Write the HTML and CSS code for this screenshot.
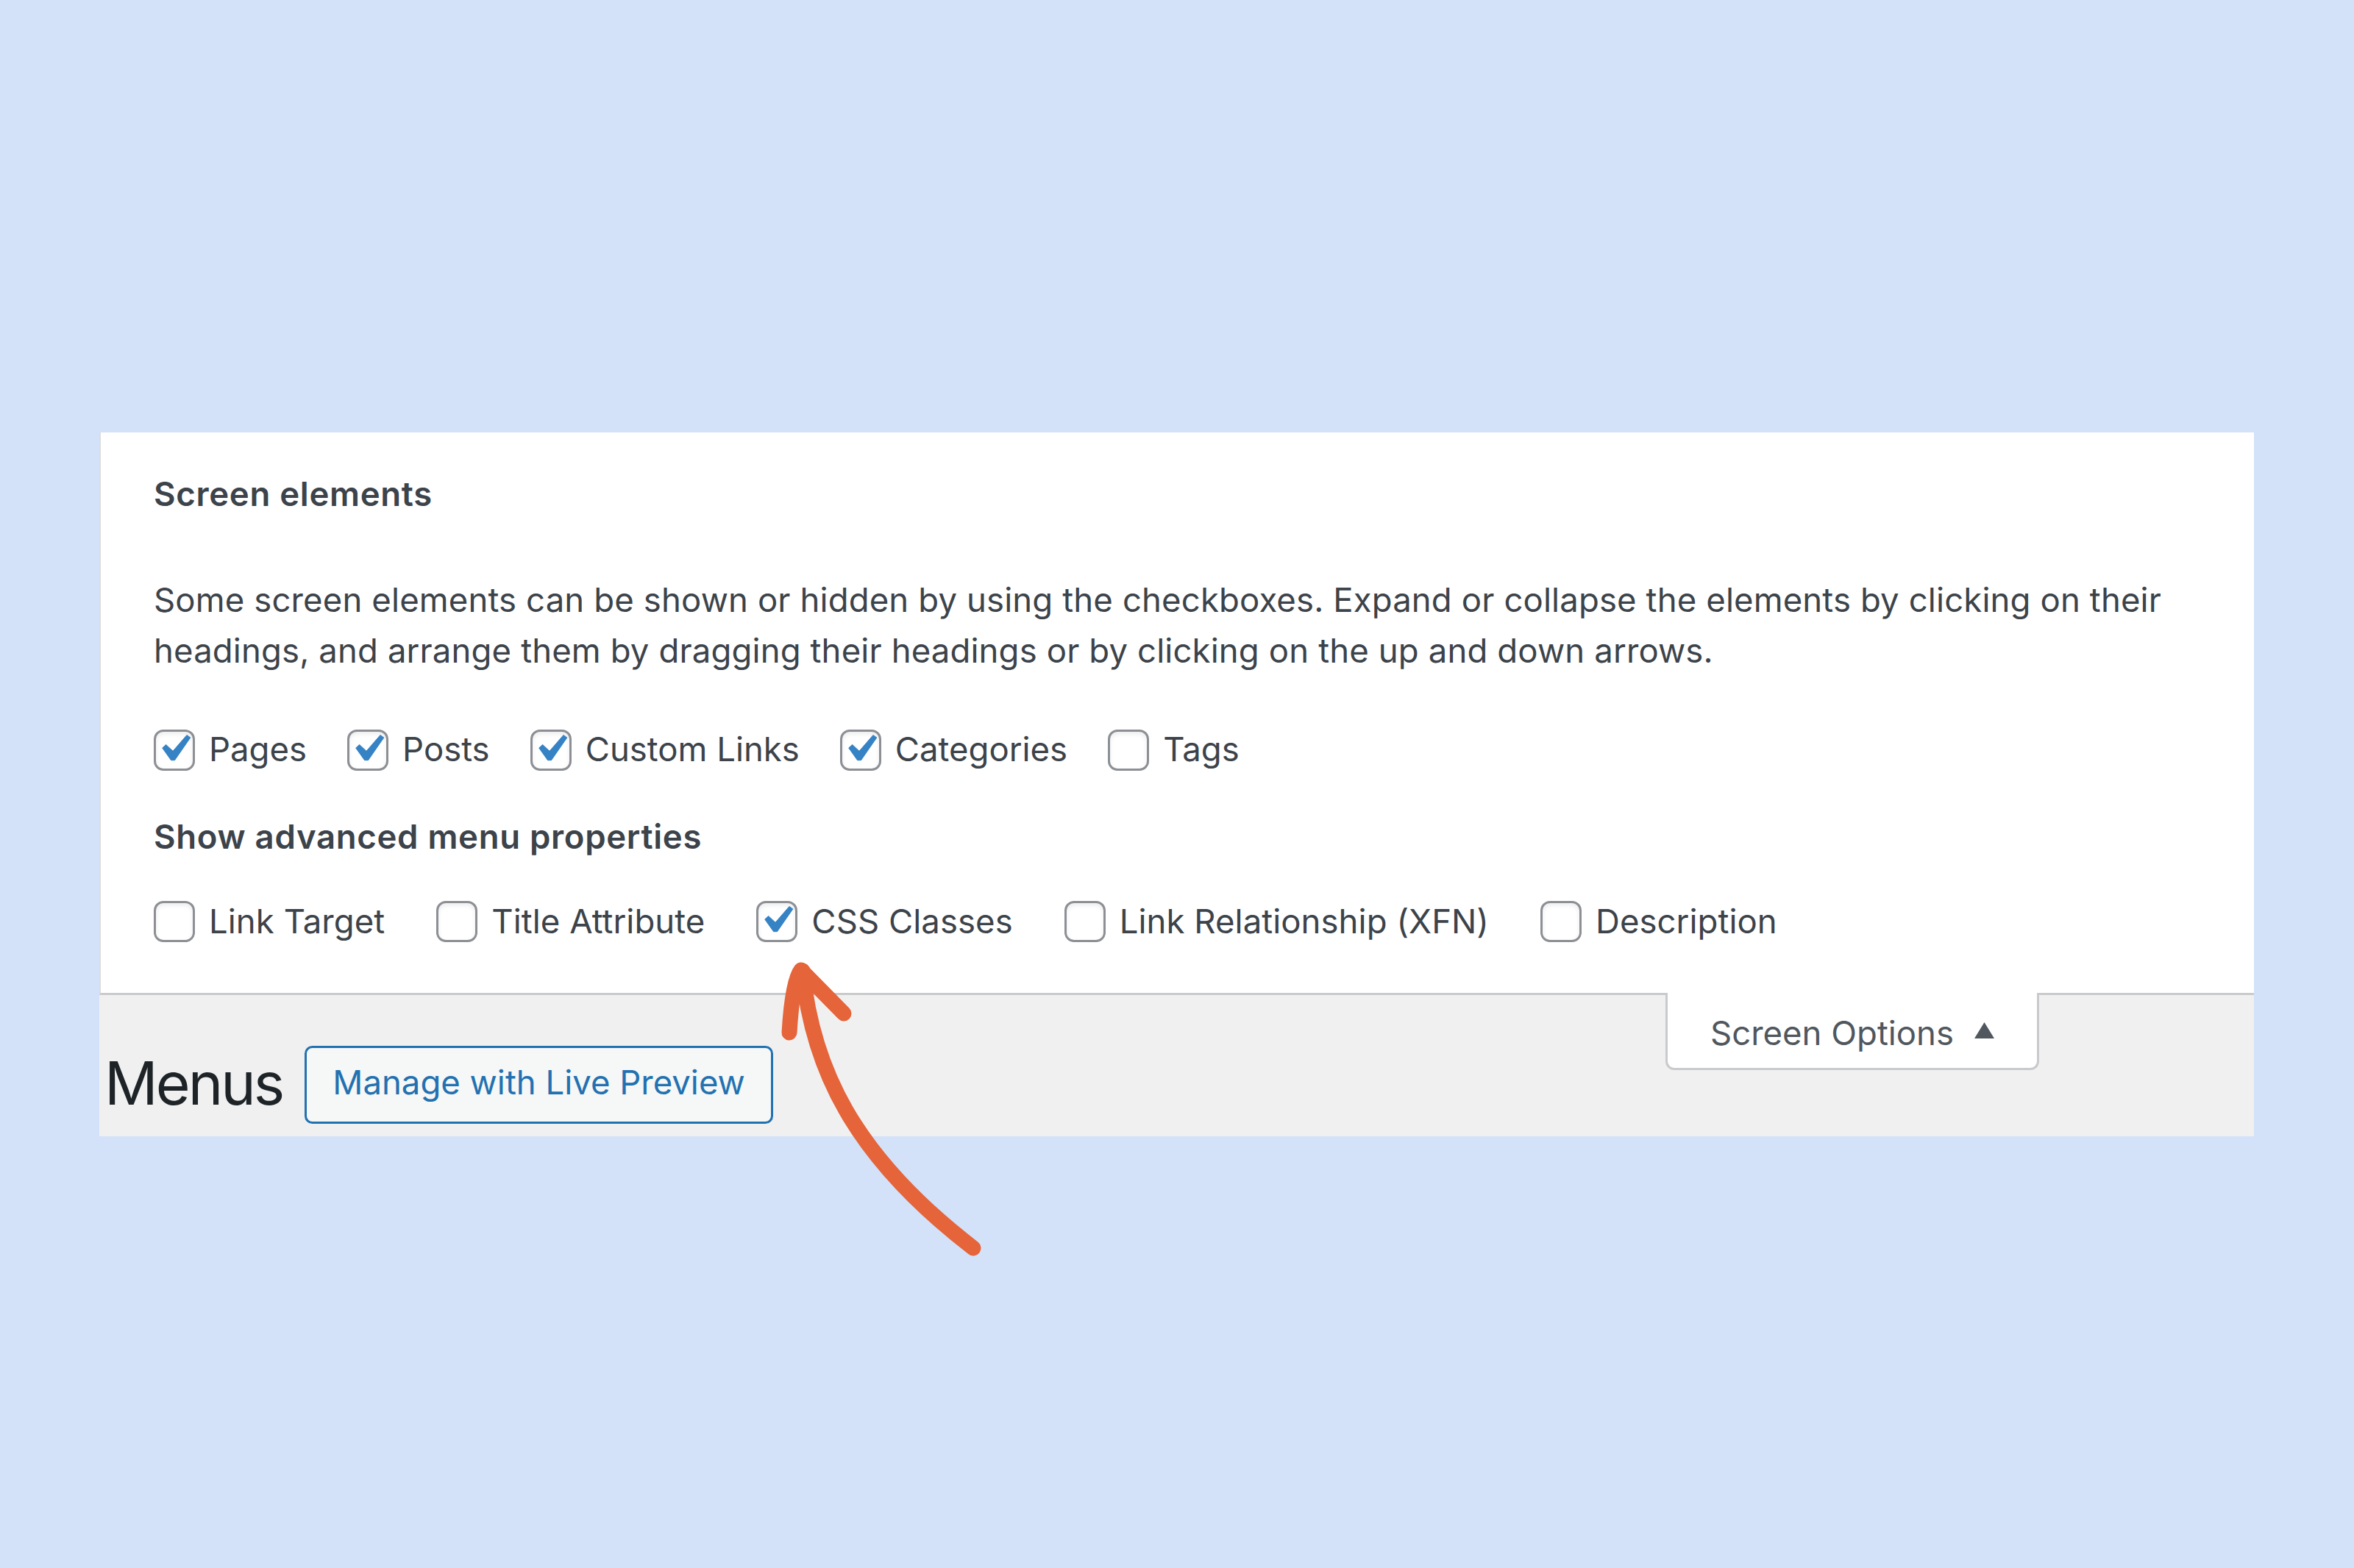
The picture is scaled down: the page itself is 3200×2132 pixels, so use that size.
FILE: index.html
```html
<!DOCTYPE html>
<html lang="en">
<head>
<meta charset="utf-8">
<title>Screen Options – Menus</title>
<link rel="stylesheet" href="styles.css">
</head>
<body>
<div class="stage">
  <div class="screen">
    <div class="panel">
      <h5 class="legend">Screen elements</h5>
      <p class="desc">Some screen elements can be shown or hidden by using the checkboxes. Expand or collapse the elements by clicking on their headings, and arrange them by dragging their headings or by clicking on the up and down arrows.</p>
      <div class="prefs prefs-boxes">
        <label class="opt"><span class="cb"><svg class="tick" viewBox="2.6 2.86 15.24 15.24"><path d="M14.83 4.89l1.34.94-5.81 8.38H9.02L5.78 9.670l1.34-1.25 2.57 2.4z"/></svg></span>Pages</label>
        <label class="opt"><span class="cb"><svg class="tick" viewBox="2.6 2.86 15.24 15.24"><path d="M14.83 4.89l1.34.94-5.81 8.38H9.02L5.78 9.670l1.34-1.25 2.57 2.4z"/></svg></span>Posts</label>
        <label class="opt"><span class="cb"><svg class="tick" viewBox="2.6 2.86 15.24 15.24"><path d="M14.83 4.89l1.34.94-5.81 8.38H9.02L5.78 9.670l1.34-1.25 2.57 2.4z"/></svg></span>Custom Links</label>
        <label class="opt"><span class="cb"><svg class="tick" viewBox="2.6 2.86 15.24 15.24"><path d="M14.83 4.89l1.34.94-5.81 8.38H9.02L5.78 9.670l1.34-1.25 2.57 2.4z"/></svg></span>Categories</label>
        <label class="opt"><span class="cb"></span>Tags</label>
      </div>
      <h5 class="legend legend-adv">Show advanced menu properties</h5>
      <div class="prefs prefs-advanced">
        <label class="opt"><span class="cb"></span>Link Target</label>
        <label class="opt"><span class="cb"></span>Title Attribute</label>
        <label class="opt"><span class="cb"><svg class="tick" viewBox="2.6 2.86 15.24 15.24"><path d="M14.83 4.89l1.34.94-5.81 8.38H9.02L5.78 9.670l1.34-1.25 2.57 2.4z"/></svg></span>CSS Classes</label>
        <label class="opt"><span class="cb"></span>Link Relationship (XFN)</label>
        <label class="opt"><span class="cb"></span>Description</label>
      </div>
    </div>
    <div class="header-bar">
      <h1 class="page-title">Menus</h1>
      <a class="btn-live">Manage with Live Preview</a>
      <div class="tab">
        <span class="tab-label">Screen Options</span>
        <svg class="tab-arrow" viewBox="0 0 27 22"><path d="M13.5 0L27 22H0z"/></svg>
      </div>
    </div>
  </div>
  <svg class="arrow" viewBox="1040 1290 320 430" width="320" height="430">
    <path d="M1091 1320 C 1104 1450, 1158 1570, 1323 1697" />
    <path d="M1073 1404 C 1075 1370, 1079 1332, 1089 1319 L 1147 1378" />
  </svg>
</div>
</body>
</html>
```

FILE: styles.css
```css
html, body {
  margin: 0;
  padding: 0;
}

body {
  background: #d3e2f9;
  min-height: 2132px;
  font-family: "Inter", "Liberation Sans", sans-serif;
  color: #3c434a;
}

.stage {
  position: relative;
  padding: 588px 0 0 135px;
  min-height: 1544px;
}

.screen {
  width: 2929px;
}

.panel {
  background: #ffffff;
  border-left: 2px solid #dcdcde;
  border-bottom: 3px solid #c9cacd;
  padding: 50.4px 73px 63.4px 72px;
}

.legend {
  margin: 0;
  font-size: 45.5px;
  line-height: 68.25px;
  font-weight: 600;
  letter-spacing: 0.7px;
  color: #3c434a;
}

.legend-adv {
  margin-top: 50.8px;
}

.desc {
  margin: 75.8px 0 0;
  font-size: 45.5px;
  line-height: 68.25px;
  letter-spacing: 0.13px;
  color: #3c434a;
}

.prefs {
  display: flex;
  align-items: center;
  font-size: 45.5px;
  line-height: 68.25px;
}

.prefs-boxes {
  margin-top: 66.5px;
  gap: 55px;
}

.prefs-advanced {
  margin-top: 45.8px;
  gap: 70px;
  letter-spacing: 0.05px;
}

.opt {
  display: flex;
  align-items: center;
  color: #3c434a;
}

.cb {
  box-sizing: border-box;
  width: 56px;
  height: 56px;
  border: 3px solid #8c8f94;
  border-radius: 13px;
  background: #ffffff;
  box-shadow: inset 0 3px 6px rgba(0, 0, 0, 0.08);
  margin-right: 19px;
  flex: none;
}

.tick {
  display: block;
  width: 56px;
  height: 56px;
  margin: -3px;
  fill: #3582c4;
  stroke: #3582c4;
  stroke-width: 0.25;
  stroke-linejoin: round;
}

.header-bar {
  display: flex;
  align-items: flex-start;
  background: #f0f0f0;
  height: 192px;
  padding-left: 7px;
}

.page-title {
  margin: 67.4px 0 0;
  font-size: 80.5px;
  line-height: 104.65px;
  font-weight: 400;
  letter-spacing: -3px;
  color: #1d2327;
}

.btn-live {
  margin: 69px 0 0 30px;
  box-sizing: border-box;
  height: 106px;
  padding: 0 35px 6px;
  border: 3px solid #2271b1;
  border-radius: 10.5px;
  background: #f6f7f7;
  color: #2271b1;
  font-size: 45.5px;
  line-height: 94px;
  white-space: nowrap;
}

.tab {
  margin: -3px 292px 0 auto;
  display: flex;
  align-items: flex-start;
  background: #ffffff;
  border: 3px solid #c9cacd;
  border-top: 0;
  border-radius: 0 0 12px 12px;
  padding: 20.4px 58px 13.4px;
  font-size: 45.5px;
  line-height: 68.25px;
  color: #50575e;
}

.tab-arrow {
  width: 27px;
  height: 22px;
  margin: 19.6px 0 0 28px;
  fill: #50575e;
}

.arrow {
  position: absolute;
  left: 1040px;
  top: 1290px;
  overflow: visible;
  fill: none;
  stroke: #e5643a;
  stroke-width: 21px;
  stroke-linecap: round;
  stroke-linejoin: round;
}
```
